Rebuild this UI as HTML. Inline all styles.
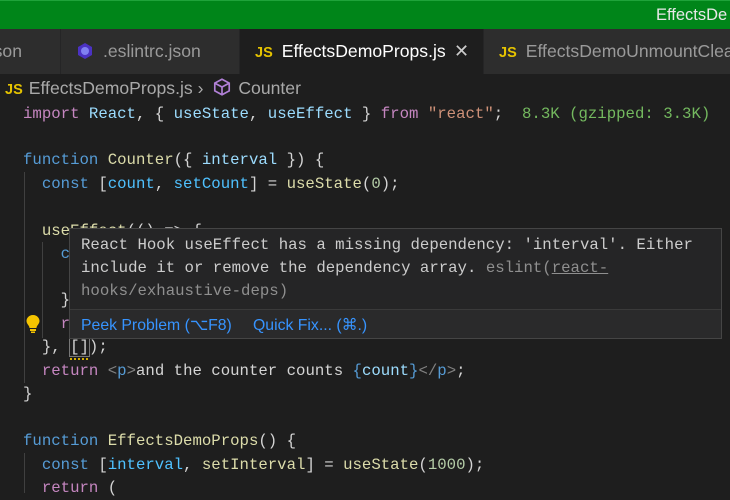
<!DOCTYPE html>
<html><head><meta charset="utf-8"><style>
*{margin:0;padding:0;box-sizing:border-box}
body{width:730px;height:491px;overflow:hidden;background:#1e1e1e;position:relative;font-family:"Liberation Sans",sans-serif}
.top{position:absolute;left:0;top:0;width:730px;height:29px;background:#008519;border-top:1px solid #1fa33a}
.top span{position:absolute;left:656px;top:5px;color:#e8e8e8;font-size:16.5px}
.tabs{position:absolute;left:0;top:29px;width:730px;height:45px;background:#252526}
.tab{position:absolute;top:0;height:45px;background:#2d2d2d;color:#9a9a9a;font-size:17.6px;line-height:45px;white-space:nowrap;overflow:hidden}
.js{color:#e5c300;font-weight:bold;font-size:14.5px;margin-right:9px}
.crumb{position:absolute;left:5px;top:77px;color:#a9a9a9;font-size:17.6px;white-space:nowrap}
.code{font-family:"Liberation Mono",monospace;font-size:15.7px;color:#d4d4d4;white-space:pre;position:absolute;left:23px;line-height:23px}
.k{color:#c586c0}.b{color:#569cd6}.f{color:#dcdcaa}.v{color:#9cdcfe}.s{color:#ce9178}.c{color:#4fc1ff}.n{color:#b5cea8}.g{color:#74b95f}
.guide{position:absolute;width:1px;background:#404040}
.tip{position:absolute;left:69px;top:228px;width:653px;height:111px;background:#252526;border:1px solid #454545}
.tip .t{font-family:"Liberation Mono",monospace;font-size:15.7px;color:#cccccc;white-space:pre;position:absolute;left:11px;line-height:23px}
.tip .sep{position:absolute;left:0;right:0;top:80px;height:1px;background:#3a3a3a}
.tip .bar{position:absolute;left:0;right:0;top:81px;bottom:0;background:#2a2a2b}
.lnk{position:absolute;top:86px;color:#3794ff;font-size:15.8px}
</style></head><body>
<div class="top"><span>EffectsDe</span></div>
<div class="tabs">
 <div class="tab" style="left:0;width:60px;"><span style="position:absolute;right:38px;top:0">json</span></div>
 <div class="tab" style="left:61px;width:178px;padding-left:14px"><svg width="20" height="20" viewBox="0 0 20 20" style="vertical-align:-4px;margin-right:8px"><polygon points="10,2 17,6 17,14 10,18 3,14 3,6" fill="#4b32c3"/><circle cx="10" cy="10" r="4" fill="#8080f2"/></svg>.eslintrc.json</div>
 <div class="tab" style="left:240px;width:243px;background:#1e1e1e;color:#fff;padding-left:15px"><span class="js">JS</span>EffectsDemoProps.js<span style="position:absolute;left:214px;color:#ccc;font-size:18px">✕</span></div>
 <div class="tab" style="left:484px;width:246px;padding-left:15px"><span class="js">JS</span>EffectsDemoUnmountClea</div>
</div>
<div class="crumb"><span class="js" style="margin-right:6px">JS</span>EffectsDemoProps.js <span style="color:#aaa">›</span> <svg width="20" height="20" viewBox="0 0 18 18" style="vertical-align:-3px;margin:0 6px 0 4px"><path d="M9 2 L15.5 5.5 L15.5 12.5 L9 16 L2.5 12.5 L2.5 5.5 Z M2.5 5.5 L9 9 L15.5 5.5 M9 9 L9 16" fill="none" stroke="#b180d7" stroke-width="1.5"/></svg>Counter</div>

<div class="guide" style="left:24px;top:172px;height:211px"></div>
<div class="guide" style="left:42px;top:242px;height:96px"></div>
<div class="guide" style="left:24px;top:453px;height:40px"></div>

<div class="code" style="top:103px"><span class="k">import</span> <span class="v">React</span>, { <span class="v">useState</span>, <span class="v">useEffect</span> } <span class="k">from</span> <span class="s">"react"</span>;  <span class="g">8.3K (gzipped: 3.3K)</span></div>
<div class="code" style="top:149px"><span class="b">function</span> <span class="f">Counter</span>({ <span class="v">interval</span> }) {</div>
<div class="code" style="top:173px">  <span class="b">const</span> [<span class="c">count</span>, <span class="c">setCount</span>] = <span class="f">useState</span>(<span class="n">0</span>);</div>
<div class="code" style="top:220px">  <span class="f">useEffect</span>(() => {</div>
<div class="code" style="top:243px">    <span class="b">const</span> <span class="c">id</span></div>
<div class="code" style="top:289px">    }</div>
<div class="code" style="top:313px">    <span class="k">return</span></div>
<div class="code" style="top:336px">  }, <span style="outline:1px solid #777">[]</span>);</div>
<div style="position:absolute;left:70px;top:357px;width:18px;height:3px;border-bottom:2px dotted #d7b000"></div>
<div class="code" style="top:360px">  <span class="k">return</span> <span style="color:#808080">&lt;</span><span class="b">p</span><span style="color:#808080">&gt;</span>and the counter counts <span class="b">{</span><span class="v">count</span><span class="b">}</span><span style="color:#808080">&lt;/</span><span class="b">p</span><span style="color:#808080">&gt;</span>;</div>
<div class="code" style="top:383px">}</div>
<div class="code" style="top:430px"><span class="b">function</span> <span class="f">EffectsDemoProps</span>() {</div>
<div class="code" style="top:454px">  <span class="b">const</span> [<span class="c">interval</span>, <span class="f">setInterval</span>] = <span class="f">useState</span>(<span class="n">1000</span>);</div>
<div class="code" style="top:477px">  <span class="k">return</span> (</div>

<svg style="position:absolute;left:25px;top:314px" width="16" height="20" viewBox="0 0 16 20"><path d="M8 1 C3.5 1 1.5 4.5 1.5 7 C1.5 10 4.5 11.5 4.5 14 L11.5 14 C11.5 11.5 14.5 10 14.5 7 C14.5 4.5 12.5 1 8 1 Z" fill="#f5c400"/><rect x="5" y="15" width="6" height="2" fill="#f5c400"/><rect x="6" y="17.5" width="4" height="1.5" fill="#f5c400"/></svg>

<div class="tip">
 <div class="t" style="top:5px">React Hook useEffect has a missing dependency: 'interval'. Either</div>
 <div class="t" style="top:28px">include it or remove the dependency array. <span style="color:#8f8f8f">eslint(<span style="text-decoration:underline">react-</span></span></div>
 <div class="t" style="top:51px;color:#8f8f8f">hooks/exhaustive-deps)</div>
 <div class="bar"></div><div class="sep"></div>
 <span class="lnk" style="left:11px">Peek Problem (⌥F8)</span>
 <span class="lnk" style="left:183px">Quick Fix... (⌘.)</span>
</div>
</body></html>
